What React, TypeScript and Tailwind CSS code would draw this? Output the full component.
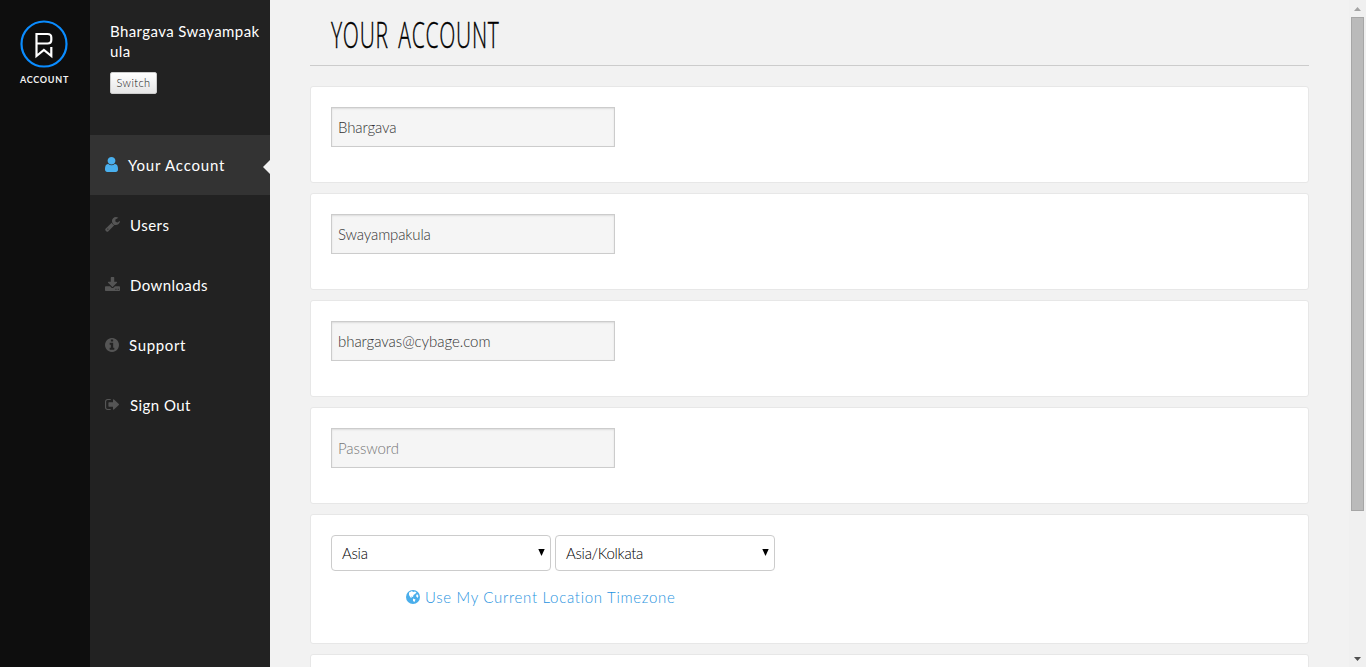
import React from "react";

type IconProps = { d: string; box?: string; className: string };
const Icon = ({ d, box = "0 0 1792 1792", className }: IconProps) => (
  <svg viewBox={box} preserveAspectRatio="none" fill="currentColor" className={className}><path d={d} /></svg>
);

const user = "M1280 1399q0 109-62.5 187t-150.5 78h-854q-88 0-150.5-78t-62.5-187q0-85 8.5-160.5t31.5-152 58.5-131 94-89 134.5-34.5q131 128 313 128t313-128q76 0 134.5 34.5t94 89 58.5 131 31.5 152 8.5 160.5zm-256-887q0 159-112.5 271.5t-271.5 112.5-271.5-112.5-112.5-271.5 112.5-271.5 271.5-112.5 271.5 112.5 112.5 271.5z";
const wrench = "M448 1472q0-26-19-45t-45-19-45 19-19 45 19 45 45 19 45-19 19-45zm644-420l-682 682q-37 37-90 37-52 0-91-37l-106-108q-38-36-38-90 0-53 38-91l681-681q39 98 114.5 173.5t173.5 114.5zm634-435q0 39-23 106-47 134-164.5 217.5t-258.5 83.5q-185 0-316.5-131.5t-131.5-316.5 131.5-316.5 316.5-131.5q58 0 121.5 16.5t107.5 46.5q16 11 16 28t-16 28l-293 169v224l193 107q5-3 79-48.5t135.5-81 70.5-35.5q15 0 23.5 10t8.5 25z";
const download = "M1344 1344q0-26-19-45t-45-19-45 19-19 45 19 45 45 19 45-19 19-45zm256 0q0-26-19-45t-45-19-45 19-19 45 19 45 45 19 45-19 19-45zm128-224v320q0 40-28 68t-68 28h-1472q-40 0-68-28t-28-68v-320q0-40 28-68t68-28h465l135 136q58 56 136 56t136-56l136-136h464q40 0 68 28t28 68zm-325-569q17 41-14 70l-448 448q-18 19-45 19t-45-19l-448-448q-31-29-14-70 17-39 59-39h256v-448q0-26 19-45t45-19h256q26 0 45 19t19 45v448h256q42 0 59 39z";
const info = "M1152 1376v-160q0-14-9-23t-23-9h-96v-512q0-14-9-23t-23-9h-320q-14 0-23 9t-9 23v160q0 14 9 23t23 9h96v320h-96q-14 0-23 9t-9 23v160q0 14 9 23t23 9h448q14 0 23-9t9-23zm-128-896v-160q0-14-9-23t-23-9h-192q-14 0-23 9t-9 23v160q0 14 9 23t23 9h192q14 0 23-9t9-23zm640 416q0 209-103 385.5t-279.5 279.5-385.5 103-385.5-103-279.5-279.5-103-385.5 103-385.5 279.5-279.5 385.5-103 385.5 103 279.5 279.5 103 385.5z";
const signOut = "M704 1440q0 4 1 20t.5 26.5-3 23.5-10 19.5-20.5 6.5h-320q-119 0-203.5-84.5t-84.5-203.5v-704q0-119 84.5-203.5t203.5-84.5h320q13 0 22.5 9.5t9.5 22.5q0 4 1 20t.5 26.5-3 23.5-10 19.5-20.5 6.5h-320q-66 0-113 47t-47 113v704q0 66 47 113t113 47h312l11.5 1 11.5 3 8 5.5 7 9 2 13.5zm928-544q0 26-19 45l-544 544q-19 19-45 19t-45-19-19-45v-288h-448q-26 0-45-19t-19-45v-384q0-26 19-45t45-19h448v-288q0-26 19-45t45-19 45 19l544 544q19 19 19 45z";

const nav = [
  { label: "Your Account", d: user, box: "0 128 1280 1536", icon: "h-[15px] w-[13px]", text: "ml-2.5 tracking-[0.8px]" },
  { label: "Users", d: wrench, box: "64 128 1664 1664", icon: "h-[15px] w-[15px]", text: "ml-2.5 tracking-[0.5px]" },
  { label: "Downloads", d: download, box: "64 0 1664 1536", icon: "mb-0.5 h-3.5 w-[15px]", text: "ml-2.5 tracking-[0.4px]" },
  { label: "Support", d: info, box: "128 128 1536 1536", icon: "h-3.5 w-3.5", text: "ml-2.5 tracking-[0.65px]" },
  { label: "Sign Out", d: signOut, box: "64 256 1568 1280", icon: "h-[11px] w-3.5", text: "ml-[11px] tracking-[0.45px]" },
];

const fields = [
  { value: "Bhargava", text: "pt-px tracking-[-0.1px] text-[#333]" },
  { value: "Swayampakula", text: "pt-px tracking-[-0.15px] text-[#333]" },
  { value: "bhargavas@cybage.com", text: "pt-px tracking-[-0.05px] text-[#333]" },
  { value: "Password", text: "tracking-[-0.05px] text-[#777]" },
];

const Select = ({ value }: { value: string }) => (
  <div className="flex h-9 w-[220px] items-center justify-between rounded-[4px] border border-[#ccc] bg-white pl-2.5 pr-[5px] text-[15px] font-light tracking-[-0.3px] text-black">
    <span className="pt-px">{value}</span>
    <svg viewBox="0 0 7 7" className="mb-px h-[7px] w-[7px]"><path d="M.3 0h6.4L3.5 7z" /></svg>
  </div>
);

export default function App() {
  return (
    <div className="flex h-[667px] w-full overflow-hidden bg-[#f2f2f2] font-['Lato',sans-serif]">
      <aside className="flex w-[90px] shrink-0 flex-col items-center bg-[#0e0e0e] pt-5">
        <svg viewBox="0 0 48 48" className="mr-[3px] h-12 w-12" fill="none">
          <circle cx="24" cy="24" r="22.5" stroke="#0a8cff" strokeWidth="2.2" />
          <path d="M16.500 23.500H27.500q3.800 0 3.800-3.500v-2.500q0-3.500-3.800-3.500H16.500v22l7.400-6 7.400 6v-9" stroke="#fff" strokeWidth="2.2" />
        </svg>
        <span className="mr-px mt-1.5 text-[9px] font-bold leading-3 tracking-[0.75px] text-[#f2f2f2]">ACCOUNT</span>
      </aside>
      <aside className="flex w-[180px] shrink-0 flex-col bg-[#222]">
        <div className="h-[135px] pl-5 pr-2.5 pt-[21px] text-[15px] leading-5 tracking-[0.4px] text-white">
          <p className="break-all">Bhargava Swayampakula</p>
          <button className="mt-[11px] block h-[22px] w-[47px] rounded-[2px] border border-[#ccc] bg-linear-to-b from-white to-[#e6e6e6] text-[11px] font-light leading-5 tracking-[0.4px] text-[#111]">Switch</button>
        </div>
        {nav.map((n, i) => (
          <div key={n.label} className={i === 0 ? "flex h-[60px] items-center bg-[#333] pb-px pl-[15px] text-[#4ab0ee]" : "flex h-[60px] items-center pb-px pl-[15px] text-[#555]"}>
            <Icon d={n.d} box={n.box} className={n.icon} />
            <span className={"text-[15px] leading-5 text-white " + n.text}>{n.label}</span>
            {i === 0 && <svg viewBox="0 0 7 14" className="ml-auto mt-[5px] h-3.5 w-[7px]"><path d="M7 0v14L0 7z" fill="#f2f2f2" /></svg>}
          </div>
        ))}
      </aside>
      <main className="flex min-w-0 flex-1 flex-col pl-10 pr-10">
        <header className="h-[66px] shrink-0 border-b border-[#ccc] pl-[21px] pt-[7px]">
          <h1 className="w-max origin-left scale-x-[0.568] font-['Open_Sans',sans-serif] text-[37px] font-light leading-[54px] tracking-[1.3px] text-black [-webkit-text-stroke:0.4px_black] [word-spacing:6px]">YOUR ACCOUNT</h1>
        </header>
        <div className="mt-5 flex flex-col gap-2.5">
          {fields.map((f) => (
            <section key={f.value} className="h-[97px] rounded-[3px] border border-[#e7e7e7] bg-white p-5">
              <div className={"flex h-10 w-[284px] items-center border border-[#ccc] bg-[#f5f5f5] px-1.5 text-[15px] font-light shadow-[inset_0_1px_2px_rgba(0,0,0,0.1)] " + f.text}>
                <span>{f.value}</span>
              </div>
            </section>
          ))}
          <section className="h-[130px] rounded-[3px] border border-[#e7e7e7] bg-white p-5">
            <div className="flex gap-1">
              <Select value="Asia" />
              <Select value="Asia/Kolkata" />
            </div>
            <a className="ml-[75px] mt-4 flex h-5 items-center text-[15px] font-light tracking-[0.7px] text-[#1f93e0]">
              <svg viewBox="0 0 14 14" className="mb-px mr-[5px] h-3.5 w-3.5 text-[#4aaeeb]">
                <circle cx="7" cy="7" r="7" fill="currentColor" />
                <path d="M3 2.500L6 1l1 1 2-.5 1.500 1L9 4 7.500 5 7 7 5 6.500 6 8 4.500 7.500 3 5zM11 4l1.500 2-1 2-1.500-2zM7 8.500l2.500 1L8.500 12 7 11z" fill="#fff" />
              </svg>
              <span>Use My Current Location Timezone</span>
            </a>
          </section>
          <section className="h-[97px] rounded-[3px] border border-[#e7e7e7] bg-white" />
        </div>
      </main>
      <div className="flex w-[17px] shrink-0 flex-col items-center bg-[#f0f0f0]">
        <div className="flex h-[17px] items-center"><svg viewBox="0 0 7 4" className="h-1 w-[7px]"><path d="M0 4h7L3.500 0z" fill="#a3a3a3" /></svg></div>
        <div className="h-[494px] w-[13px] border border-[#a6a6a6] bg-[#bababa]" />
        <div className="mt-auto flex h-[17px] items-center"><svg viewBox="0 0 7 4" className="h-1 w-[7px]"><path d="M0 0h7L3.500 4z" fill="#505050" /></svg></div>
      </div>
    </div>
  );
}
